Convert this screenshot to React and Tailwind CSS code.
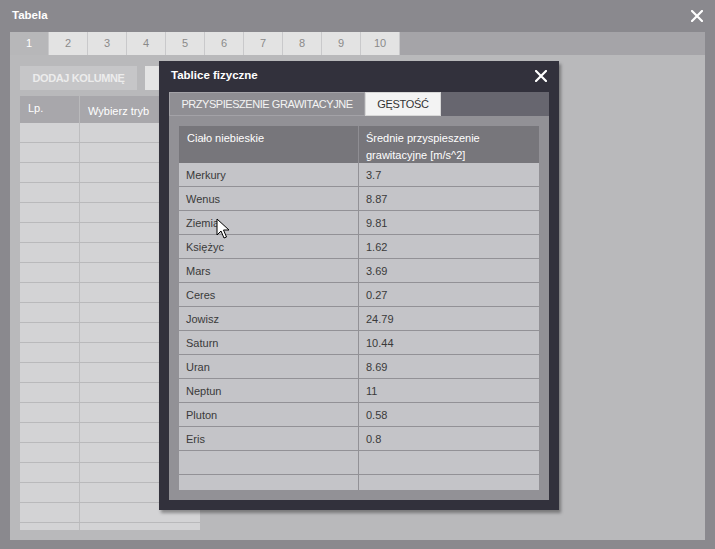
import React from 'react'

const planets = [
  ['Merkury', '3.7'],
  ['Wenus', '8.87'],
  ['Ziemia', '9.81'],
  ['Księżyc', '1.62'],
  ['Mars', '3.69'],
  ['Ceres', '0.27'],
  ['Jowisz', '24.79'],
  ['Saturn', '10.44'],
  ['Uran', '8.69'],
  ['Neptun', '11'],
  ['Pluton', '0.58'],
  ['Eris', '0.8'],
  ['', ''],
  ['', ''],
]

function CloseIcon() {
  return (
    <svg width="12" height="12" viewBox="0 0 12 12" className="block">
      <path d="M1 1L11 11M11 1L1 11" stroke="#ffffff" strokeWidth="2.2" strokeLinecap="square" />
    </svg>
  )
}

function Cursor() {
  return (
    <svg width="14" height="22" viewBox="0 0 14 22" className="absolute left-[216px] top-[218px]">
      <path d="M1 1 L1 17 L5 13 L8 20 L10.5 19 L7.5 12 L13 12 Z" fill="#ffffff" stroke="#000000" strokeWidth="1" strokeLinejoin="miter" />
    </svg>
  )
}

export default function App() {
  const tabs = ['1', '2', '3', '4', '5', '6', '7', '8', '9', '10']
  const leftRows = Array.from({ length: 21 })

  return (
    <div className="relative w-[715px] h-[549px] overflow-hidden bg-[#8a898e] text-[11px] font-['Liberation_Sans',Arial,sans-serif]">
      <div className="h-[32px] flex items-center justify-between pl-[12px] pr-[12px]">
        <span className="font-bold text-white text-[11.5px]">Tabela</span>
        <CloseIcon />
      </div>

      <div className="mx-[10px] h-[23px] bg-[#a5a4a8] flex">
        {tabs.map((t, i) => (
          <div
            key={t}
            className={
              i === 0
                ? 'w-[39px] flex items-center pl-[16px] bg-[#b7b7b9] text-white border-r border-[#c9c9cb]'
                : 'w-[39px] flex items-center justify-center bg-[#e3e3e3] text-[#8a8a8a] border-r border-[#c9c9cb]'
            }
          >
            {t}
          </div>
        ))}
      </div>

      <div className="mx-[10px] h-[485px] bg-[#b9b9bb] px-[10px] pt-[11px]">
        <div className="flex gap-[8px]">
          <div className="w-[117px] h-[24px] bg-[#c6c6c8] text-[#ececec] font-bold tracking-[-0.4px] flex items-center justify-center">
            DODAJ KOLUMNĘ
          </div>
          <div className="w-[100px] h-[24px] bg-[#e4e4e4]" />
        </div>

        <div className="mt-[6px] w-[180px] h-[434px] overflow-hidden">
          <div className="flex h-[27px] bg-[#a8a7ab] text-white">
            <div className="w-[60px] pl-[8px] pt-[4px] border-r border-[#b9b9bb]">Lp.</div>
            <div className="flex-1 pl-[8px] pt-[7px]">Wybierz tryb</div>
          </div>
          {leftRows.map((_, i) => (
            <div key={i} className="flex h-[20px] bg-[#d3d3d5] border-b border-[#b9b9bb]">
              <div className="w-[60px] border-r border-[#bdbdbf]" />
              <div className="flex-1" />
            </div>
          ))}
        </div>
      </div>

      <div className="absolute left-[159px] top-[61px] w-[400px] h-[449px] bg-[#32313c] shadow-[2px_3px_3px_rgba(0,0,0,0.35)]">
        <div className="h-[29px] flex items-center justify-between pl-[12px] pr-[12px]">
          <span className="font-bold text-white text-[11.5px]">Tablice fizyczne</span>
          <CloseIcon />
        </div>
        <div className="mt-[2px] mx-[10px] h-[408px] bg-[#929196] flex flex-col">
          <div className="h-[24px] bg-[#67666f] flex">
            <div className="w-[196px] bg-[#8f8e93] border border-[#a3a2a7] text-[#f4f4f4] whitespace-nowrap tracking-[-0.45px] flex items-center justify-center">
              PRZYSPIESZENIE GRAWITACYJNE
            </div>
            <div className="w-[76px] bg-[#f3f3f3] border border-[#d8d8d8] text-[#333] tracking-[-0.3px] flex items-center justify-center">
              GĘSTOŚĆ
            </div>
          </div>
          <div className="px-[10px] pt-[10px]">
            <div className="h-[364px] overflow-hidden">
              <div className="flex h-[37px] bg-[#77767b] text-white">
                <div className="w-[180px] pl-[8px] pt-[4px] border-r border-[#8f8e93]">Ciało niebieskie</div>
                <div className="flex-1 pl-[7px] pt-[4px] leading-[17px]">
                  Średnie przyspieszenie
                  <br />
                  grawitacyjne [m/s^2]
                </div>
              </div>
              {planets.map(([name, val], i) => (
                <div key={i} className="flex h-[24px] bg-[#c4c4c8] border-b border-[#929196] text-[#3a3a3a]">
                  <div className="w-[180px] pl-[7px] pt-[1px] flex items-center border-r border-[#929196]">{name}</div>
                  <div className="flex-1 pl-[7px] pt-[1px] flex items-center">{val}</div>
                </div>
              ))}
            </div>
          </div>
        </div>
      </div>

      <Cursor />
    </div>
  )
}
